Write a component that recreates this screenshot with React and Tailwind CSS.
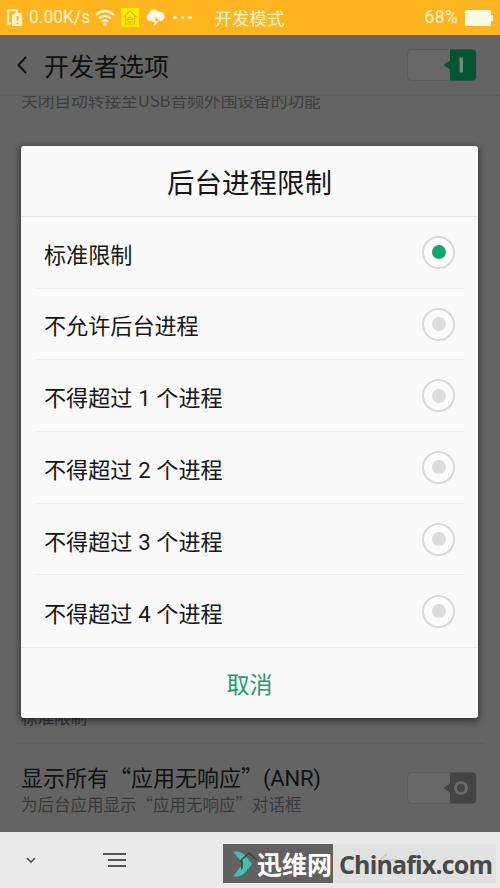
const CJK = "font-['Noto_Sans_CJK_SC',sans-serif]";

const OPTIONS = [
  { label: "标准限制", checked: true },
  { label: "不允许后台进程" },
  { label: "不得超过 1 个进程" },
  { label: "不得超过 2 个进程" },
  { label: "不得超过 3 个进程" },
  { label: "不得超过 4 个进程" },
];

function StatusBar() {
  return (
    <div className="flex h-[35px] shrink-0 items-center bg-[#ffb51f] text-[#fff3cf]">
      <svg className="ml-[7px] h-[18px] w-4 shrink-0" viewBox="0 0 16 18">
        <path d="M1.2 1.2h8.6v3M1.2 1v13.5h3" fill="none" stroke="currentColor" strokeWidth="2" />
        <path d="M7.5 4H15v13H5V6.500z" fill="currentColor" />
        <path d="M10.500 7v5M10.500 13.500v1.500" stroke="#f0a51c" strokeWidth="1.600" />
      </svg>
      <span className="ml-[6px] w-[62px] whitespace-nowrap font-['Roboto',sans-serif] text-[17.500px] leading-none">0.00K/s</span>
      <svg className="ml-1 h-[17px] w-5 shrink-0" viewBox="0 0 20 17">
        <g fill="none" stroke="currentColor" strokeWidth="2.200">
          <path d="M1 6Q10-2 19 6" />
          <path d="M4 9.500Q10 4.300 16 9.500" />
          <path d="M6.800 12.600Q10 10 13.200 12.600" />
        </g>
        <circle cx="10" cy="15" r="1.800" fill="currentColor" />
      </svg>
      <svg className="ml-[6px] h-[19px] w-[18px] shrink-0" viewBox="0 0 18 19">
        <rect width="18" height="19" fill="#ffe900" />
        <path d="M2.500 8.700 9 3l6.500 5.700M4.500 7.500V16h9V7.500" fill="none" stroke="#dfb80a" strokeWidth="1.200" />
        <path d="M6.500 11.500h5A2.500 2.500 0 1 0 10.800 13.500" fill="none" stroke="#dfb80a" strokeWidth="1.200" />
      </svg>
      <svg className="ml-[7px] h-[18px] w-[19px] shrink-0" viewBox="0 0 19 18">
        <path d="M4 12a3.700 3.700 0 0 1-.8-7.200A5 5 0 0 1 12.500 3a4.600 4.600 0 0 1 2.500 9h-2l-3-4-4 4z" fill="#fffbed" />
        <path d="M9 9l-3 4h2.500L8 17l4.500-5H9.800z" fill="#fffbed" />
      </svg>
      <div className="ml-2 flex gap-1">
        <i className="size-[3.500px] rounded-full bg-current" />
        <i className="size-[3.500px] rounded-full bg-current" />
        <i className="size-[3.500px] rounded-full bg-current" />
      </div>
      <span className="ml-[23px] text-[17.500px] leading-none">开发模式</span>
      <span className="ml-auto font-['Roboto',sans-serif] text-[17.500px] leading-none tracking-[0.3px]">68%</span>
      <svg className="mr-[7px] ml-[7px] h-4 w-7 shrink-0" viewBox="0 0 28 16">
        <path d="M2 0h22q2 0 2 2v3h2v6h-2v3q0 2-2 2H2q-2 0-2-2V2q0-2 2-2z" fill="#fffce6" />
      </svg>
    </div>
  );
}

function Switch({ on = false }) {
  return (
    <svg className="h-[34px] w-[70px] shrink-0" viewBox="0 0 70 34">
      <rect x=".5" y="1.500" width="69" height="31" rx="4" fill="#676767" stroke="#5c5c5c" />
      <path
        d="M43 1.500h22q4 0 4 4v23q0 4-4 4H43V22q-1-2-4-3-4-2 0-4 3-1 4-3z"
        fill={on ? "#055431" : "#444"}
      />
      {on ? (
        <rect x="52.500" y="9.500" width="3.500" height="15" fill="#6a8c7a" />
      ) : (
        <circle cx="54" cy="17" r="5.500" fill="none" stroke="#6a6a6a" strokeWidth="3" />
      )}
    </svg>
  );
}

function Radio({ checked }) {
  return (
    <span className="flex size-[33px] items-center justify-center rounded-full border-2 border-[#dadada] bg-[#fcfcfc]">
      <span className={checked ? "size-[14px] rounded-full bg-[#12a86e]" : "size-[14px] rounded-full bg-[#dcdcdc]"} />
    </span>
  );
}

function Dialog() {
  return (
    <div className="absolute top-[146px] left-[21px] flex h-[572px] w-[457px] flex-col rounded-[3px] bg-[#fafafa] text-[#151515] shadow-[0_2px_6px_1px_rgba(0,0,0,0.5)]">
      <h2 className="flex h-[71px] shrink-0 items-center justify-center border-b border-[#e6e6e6] pt-[2px] text-[27.500px] leading-none">后台进程限制</h2>
      <ul className="px-[14px]">
        {OPTIONS.map(({ label, checked }, i) => (
          <li
            key={label}
            className={
              i < OPTIONS.length - 1
                ? "flex h-[71.700px] items-center justify-between border-b border-[#efefef] pr-[9px] pl-[9px]"
                : "flex h-[71.700px] items-center justify-between pr-[9px] pl-[9px]"
            }
          >
            <span className="pt-[5px] font-['Roboto','Noto_Sans_CJK_SC',sans-serif] text-[22.100px] leading-none whitespace-pre [word-spacing:0.300px]">{label}</span>
            <Radio checked={checked} />
          </li>
        ))}
      </ul>
      <button className="grow border-t border-[#e9e9e9] text-[23px] leading-none text-[#239b6c]">取消</button>
    </div>
  );
}

function NavBar() {
  return (
    <div className="relative flex h-[56px] shrink-0 items-center bg-[#ebebeb]">
      <svg className="ml-[26px] h-[8px] w-[10px]" viewBox="0 0 10 8">
        <path d="M1 2l4 4 4-4" fill="none" stroke="#555" strokeWidth="1.600" />
      </svg>
      <svg className="ml-[67px] h-[16px] w-[23px]" viewBox="0 0 23 16">
        <path d="M0 2h23M5 8h18M5 14h18" stroke="#555" strokeWidth="2" />
      </svg>
      <div className="absolute top-[12px] left-[223px] flex h-[39px] w-[273px] bg-[#e1e1e1]">
        <div className="flex w-[110px] shrink-0 items-center bg-[#616161]">
          <svg className="ml-[9px] h-[28px] w-[25px] shrink-0" viewBox="0 0 25 28">
            <path d="M1 1.500h5q5 1 8 5l6 7.500-6 7.500q-3 4-8 5H1l7-9 3-3.500-3-4z" fill="#46c0ab" />
            <path d="M8 11.500L17 3l8 7M10 9v10h6" fill="none" stroke="#3d3d3d" strokeWidth="1.500" />
            <path d="M13 8l7 6-6 7-5-.5 4-6-3-4.500z" fill="#46c0ab" />
          </svg>
          <span className="-mt-[2px] text-[25px] leading-[38px] font-bold whitespace-nowrap text-white">迅维网</span>
        </div>
        <svg className="absolute top-[8px] left-[155px] h-[16px] w-[24px]" viewBox="0 0 24 16">
          <path d="M9 2L2 8h16q4 0 4 5" fill="none" stroke="#c8c8c8" strokeWidth="1.500" />
        </svg>
        <span className="relative ml-[6px] self-center font-['Open_Sans',sans-serif] text-[25px] leading-[38px] font-bold tracking-[-0.850px] whitespace-nowrap text-[#484848]">Chinafix.com</span>
      </div>
    </div>
  );
}

export default function App() {
  return (
    <div className={`${CJK} relative flex h-[888px] w-[500px] flex-col overflow-hidden bg-[#646464]`}>
      <StatusBar />
      <header className="flex h-[61px] shrink-0 items-center border-b border-[#5e5e5e] pr-[23px] pl-[17px] text-[#101010]">
        <svg className="h-[18px] w-[10px]" viewBox="0 0 10 18">
          <path d="M9 1L1.500 9 9 17" fill="none" stroke="currentColor" strokeWidth="2" />
        </svg>
        <h1 className="ml-[17px] grow text-[25px] leading-none">开发者选项</h1>
        <Switch on />
      </header>
      <main className="flex grow flex-col overflow-hidden">
        <div className="h-[16px] shrink-0 overflow-hidden pl-[21px]">
          <p className="-mt-[5px] text-[16.700px] leading-[18px] whitespace-nowrap text-[#3f3f3f]">关闭自动转接至USB音频外围设备的功能</p>
        </div>
        <p className="mt-[596px] ml-[21px] text-[16.500px] leading-[18px] text-[#333]">标准限制</p>
        <div className="mx-[16px] mt-[17px] flex h-[89px] items-center justify-between border-t border-[#5e5e5e] pr-[7px] pl-[5px]">
          <div className="pt-[2px] whitespace-nowrap">
            <p className="text-[22px] leading-[26px] text-[#111]">
              显示所有“应用无响应”
              <span className="font-['Roboto',sans-serif] tracking-[-0.200px]">(ANR)</span>
            </p>
            <p className="text-[16.500px] leading-[24px] text-[#3a3a3a]">为后台应用显示“应用无响应”对话框</p>
          </div>
          <Switch />
        </div>
      </main>
      <NavBar />
      <Dialog />
    </div>
  );
}
